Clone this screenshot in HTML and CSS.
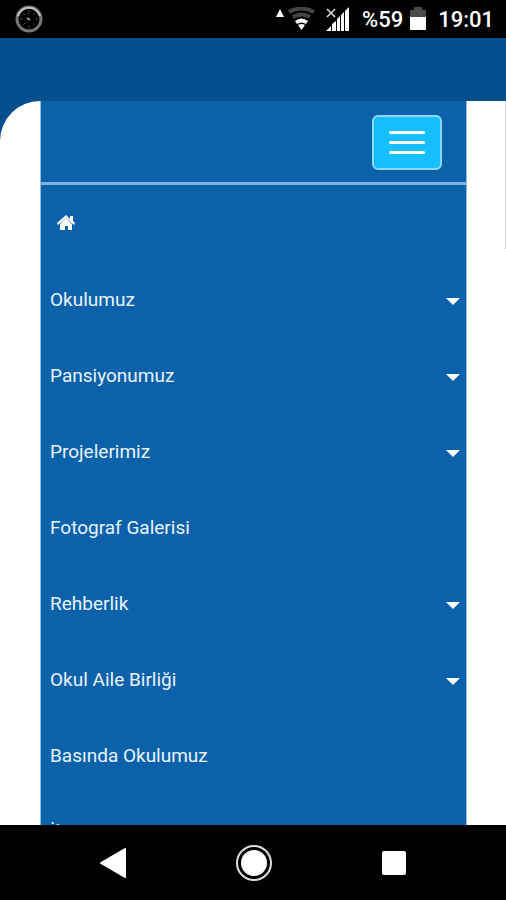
FILE: index.html
```html
<!DOCTYPE html>
<html lang="tr">
  <head>
    <meta charset="utf-8">
    <meta name="viewport" content="width=device-width, initial-scale=1">
    <title>Okulumuz</title>
    <link rel="stylesheet" href="styles.css">
  </head>
  <body>
    <div class="statusbar">
      <svg class="sync" width="28" height="28" viewBox="0 0 28 28">
        <circle cx="14" cy="14" r="12" fill="none" stroke="#777" stroke-width="3"/>
        <path d="M3 11a11.500 11.500 0 0 1 22 0" fill="none" stroke="#bdbdbd" stroke-width="2"/>
        <path d="M14 5v3M14 20v3M5 14h3M20 14h3M8 8l2 2M20 8l-2 2M8 20l2-2M20 20l-2-2" stroke="#444" stroke-width="1"/>
        <path d="M12 13l3 2" stroke="#999" stroke-width="2"/>
      </svg>
      <div class="status-right">
        <svg width="40" height="24" viewBox="0 0 40 24">
          <path d="M0 10l4-8 4 8z" fill="#fff"/>
          <g fill="none" stroke="#444" stroke-width="4">
            <path d="M13 5q12-7 25 0"/>
            <path d="M17 10q8.500-5 17 0"/>
          </g>
          <path d="M19 14q6.500-5 13 0l-2 3q-4.500-3-9 0z" fill="#fff"/>
          <path d="M22 18q3.500-2 7 0l-3.500 5z" fill="#fff"/>
        </svg>
        <svg class="signal" width="24" height="24" viewBox="0 0 24 24">
          <path d="M1 2l8 8M9 2l-8 8" stroke="#ddd" stroke-width="1.500"/>
          <path d="M0 24l5-5v5zM6 24v-7l4-3v10zM11 24V12l3-3v15zM15 24V8l3-3v19zM19 24V4l4-4v24z" fill="#fff"/>
        </svg>
        <span class="percent">%59</span>
        <svg class="battery" width="16" height="24" viewBox="0 0 16 24">
          <path d="M4 0h8v3h4v7H0V3h4z" fill="#4a4a4a"/>
          <path d="M0 10h16v13H0z" fill="#fff"/>
        </svg>
        <span class="clock">19:01</span>
      </div>
    </div>

    <div class="site">
      <div class="page">
        <nav class="menu">
          <div class="menu-header">
            <button class="toggle" type="button" aria-label="Menü">
              <span class="bar"></span>
              <span class="bar"></span>
              <span class="bar"></span>
            </button>
          </div>
          <ul class="menu-list">
            <li><a href="#" class="home" aria-label="Ana Sayfa">
              <svg width="18" height="16" viewBox="0 0 18 16">
                <path d="M9 0l4 4V1h3v5l2 2-1 2-8-7-8 7-1-2z" fill="#fff"/>
                <path d="M9 3l6 6v6h-4v-4H8v4H3V9z" fill="#fff"/>
              </svg>
            </a></li>
            <li><a href="#">Okulumuz <span class="caret"></span></a></li>
            <li><a href="#">Pansiyonumuz <span class="caret"></span></a></li>
            <li><a href="#">Projelerimiz <span class="caret"></span></a></li>
            <li><a href="#">Fotograf Galerisi</a></li>
            <li><a href="#">Rehberlik <span class="caret"></span></a></li>
            <li><a href="#">Okul Aile Birliği <span class="caret"></span></a></li>
            <li><a href="#">Basında Okulumuz</a></li>
            <li><a href="#">İletişim</a></li>
          </ul>
        </nav>
      </div>
    </div>

    <div class="navbar">
      <button type="button" aria-label="Geri">
        <svg width="28" height="32" viewBox="0 0 28 32">
          <path d="M2 16L26 2v28z" fill="#fff" stroke="#fff" stroke-width="2" stroke-linejoin="round"/>
        </svg>
      </button>
      <button type="button" aria-label="Ana ekran">
        <svg width="38" height="38" viewBox="0 0 38 38">
          <circle cx="19" cy="19" r="17" fill="none" stroke="#ddd" stroke-width="2"/>
          <circle cx="19" cy="19" r="13" fill="#fff"/>
        </svg>
      </button>
      <button type="button" aria-label="Son uygulamalar">
        <svg width="26" height="26" viewBox="0 0 26 26">
          <rect x="1" y="1" width="24" height="24" rx="2" fill="#fff"/>
        </svg>
      </button>
    </div>
  </body>
</html>
```
FILE: styles.css
```css
* {
  box-sizing: border-box;
}
body {
  margin: 0;
  height: 100vh;
  display: flex;
  flex-direction: column;
  font-family: Roboto, "Liberation Sans", sans-serif;
  font-size: 19px;
  color: #fff;
  background-color: #000;
}
.statusbar {
  display: flex;
  justify-content: space-between;
  align-items: center;
  flex: none;
  height: 38px;
  padding: 0 12px 0 15px;
}
.status-right {
  display: flex;
  align-items: center;
  font-size: 22px;
  font-weight: 500;
  line-height: 24px;
}
.percent,
.clock {
  padding-top: 2px;
}
.signal {
  margin: 0 12px 0 10px;
}
.battery {
  margin: 0 12px 0 7px;
}
.site {
  flex: 1;
  min-height: 0;
  overflow: hidden;
  padding-top: 63px;
  background-color: #064f8f;
}
.page {
  position: relative;
  padding: 0 39px 0 40px;
  border-top-left-radius: 40px;
  background-color: #fff;
}
/* edge of the content box behind the menu */
.page::after {
  content: "";
  position: absolute;
  top: 0;
  right: 0;
  width: 1px;
  height: 148px;
  background-color: #ccd3dc;
}
.menu {
  border: 1px solid #8fbde3;
  border-width: 0 1px;
  background-color: #0c62aa;
}
.menu-header {
  display: flex;
  justify-content: flex-end;
  padding: 14px 24px 12px;
  border-bottom: 3px solid #7db4df;
}
.toggle {
  display: flex;
  flex-direction: column;
  align-items: center;
  justify-content: center;
  gap: 7px;
  width: 70px;
  height: 55px;
  padding: 0;
  border: 2px solid #8fd6f5;
  border-radius: 6px;
  background-color: #16bfff;
  cursor: pointer;
}
.bar {
  width: 36px;
  height: 3px;
  border-radius: 2px;
  background-color: #fff;
}
.menu-list {
  margin: 0;
  padding: 0;
  list-style: none;
}
.menu-list a {
  display: flex;
  justify-content: space-between;
  align-items: center;
  height: 76px;
  padding: 0 6px 0 9px;
  color: #e8f3fc;
  text-decoration: none;
}
.menu-list .home {
  padding-left: 16px;
}
.caret {
  margin-top: 4px;
  border: 7px solid transparent;
  border-top-color: #fff;
  border-bottom: 0;
}
.navbar {
  display: flex;
  justify-content: space-between;
  align-items: center;
  flex: none;
  height: 75px;
  padding: 0 99px;
}
.navbar button {
  display: flex;
  padding: 0;
  border: 0;
  background: none;
  cursor: pointer;
}
```
